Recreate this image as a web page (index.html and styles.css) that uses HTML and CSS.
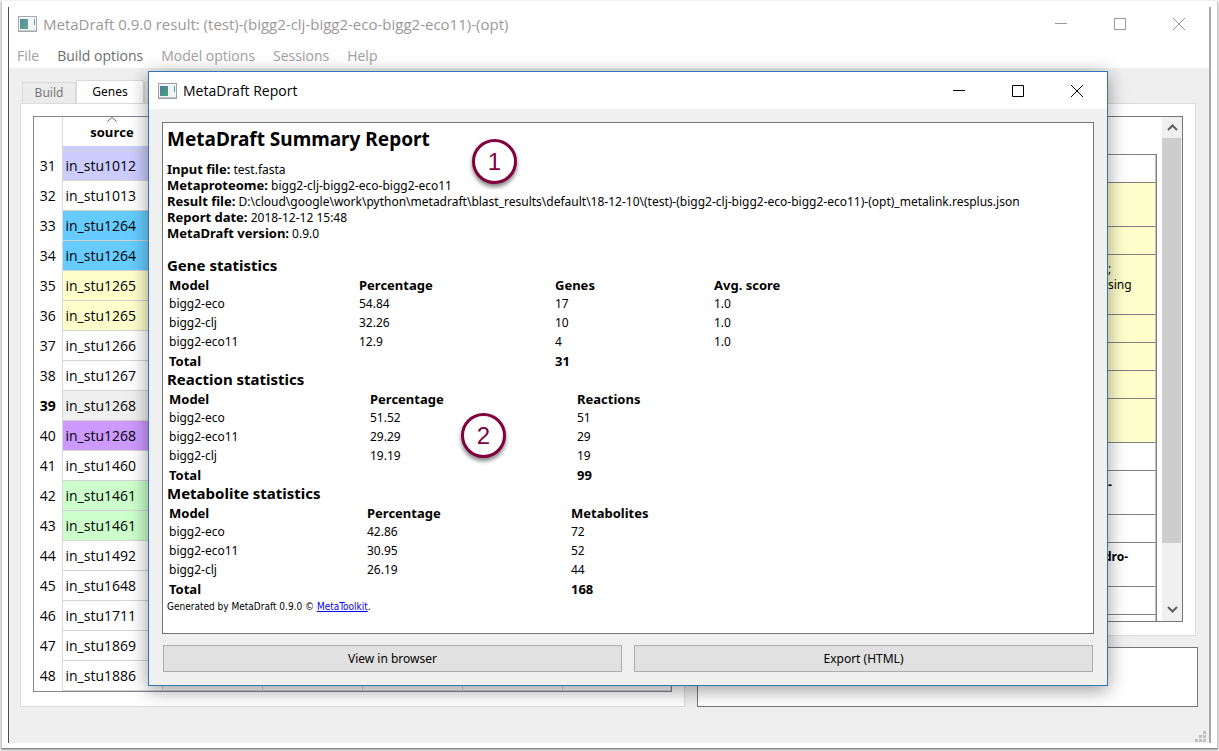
FILE: index.html
```html
<!DOCTYPE html>
<html lang="en">
<head>
<meta charset="utf-8">
<title>MetaDraft 0.9.0</title>
<link rel="stylesheet" href="styles.css">
</head>
<body>
<div class="frame">
<main class="window">
  <header class="titlebar titlebar-main">
    <svg class="app-icon" width="19" height="16" viewBox="0 0 19 16"><defs><linearGradient id="g" x1="0" y1="0" x2="1" y2="1"><stop offset="0" stop-color="#4a7ba0"/><stop offset="1" stop-color="#4ba376"/></linearGradient></defs><rect x=".5" y=".5" width="18" height="15" fill="#f1f3f4" stroke="#9aa0a6"/><rect x="2" y="3" width="8" height="10" fill="url(#g)"/><path d="M16.500 3v6" stroke="#4b9a9a"/><path d="M1 14.500h17" stroke="#c3c8cc"/></svg>
    <h1 class="title">MetaDraft 0.9.0 result: (test)-(bigg2-clj-bigg2-eco-bigg2-eco11)-(opt)</h1>
    <div class="controls">
      <button class="control" aria-label="Minimize"><svg width="12" height="12"><path d="M0 5.500h12"/></svg></button>
      <button class="control" aria-label="Maximize"><svg width="12" height="12"><path d="M.5.5h11v11H.5z"/></svg></button>
      <button class="control" aria-label="Close"><svg width="12" height="12"><path d="M0 0l12 12M12 0L0 12"/></svg></button>
    </div>
  </header>
  <nav class="menu">
    <button class="menu-item">File</button>
    <button class="menu-item active">Build options</button>
    <button class="menu-item">Model options</button>
    <button class="menu-item">Sessions</button>
    <button class="menu-item">Help</button>
  </nav>
  <div class="workspace">
    <section class="left">
      <div class="tabs">
        <button class="tab">Build</button>
        <button class="tab selected">Genes</button>
        <button class="tab" aria-label="More"></button>
      </div>
      <div class="pane pane-left">
        <div class="grid-box">
        <table class="genes">
          <colgroup><col class="c-num"><col class="c-cell"><col class="c-cell"><col class="c-cell"><col class="c-cell"><col class="c-cell"><col></colgroup>
          <thead><tr><td></td><th><svg width="10" height="5"><path d="M.5 4.500L5 .5l4.500 4"/></svg><span>source</span></th><td colspan="5"></td></tr></thead>
          <tbody>
          <tr class="sliver"><th></th><td class="lavender"></td><td colspan="5"></td></tr>
          <tr><th>31</th><td class="lavender">in_stu1012</td><td colspan="5"></td></tr>
          <tr><th>32</th><td>in_stu1013</td><td colspan="5"></td></tr>
          <tr><th>33</th><td class="blue">in_stu1264</td><td colspan="5"></td></tr>
          <tr><th>34</th><td class="blue">in_stu1264</td><td colspan="5"></td></tr>
          <tr><th>35</th><td class="yellow">in_stu1265</td><td colspan="5"></td></tr>
          <tr><th>36</th><td class="yellow">in_stu1265</td><td colspan="5"></td></tr>
          <tr><th>37</th><td>in_stu1266</td><td colspan="5"></td></tr>
          <tr><th>38</th><td>in_stu1267</td><td colspan="5"></td></tr>
          <tr><th class="current">39</th><td class="gray">in_stu1268</td><td colspan="5"></td></tr>
          <tr><th>40</th><td class="purple">in_stu1268</td><td colspan="5"></td></tr>
          <tr><th>41</th><td>in_stu1460</td><td colspan="5"></td></tr>
          <tr><th>42</th><td class="green">in_stu1461</td><td colspan="5"></td></tr>
          <tr><th>43</th><td class="green">in_stu1461</td><td colspan="5"></td></tr>
          <tr><th>44</th><td>in_stu1492</td><td colspan="5"></td></tr>
          <tr><th>45</th><td>in_stu1648</td><td colspan="5"></td></tr>
          <tr><th>46</th><td>in_stu1711</td><td colspan="5"></td></tr>
          <tr><th>47</th><td>in_stu1869</td><td colspan="5"></td></tr>
          <tr><th>48</th><td>in_stu1886</td><td></td><td></td><td></td><td></td><td></td></tr>
          </tbody>
        </table>
        </div>
      </div>
    </section>
    <section class="right">
      <div class="pane pane-right">
        <div class="details">
          <div class="rows">
            <div class="row one"></div>
            <div class="row two yellow"></div>
            <div class="row one yellow"></div>
            <div class="row three yellow"><span>;<br>sing</span></div>
            <div class="row one yellow"></div>
            <div class="row one yellow"></div>
            <div class="row one yellow"></div>
            <div class="row two yellow"></div>
            <div class="row one"></div>
            <div class="row two"><b class="dash">-</b></div>
            <div class="row one"></div>
            <div class="row two"><b class="dro">dro-</b></div>
            <div class="row one"></div>
            <div class="row rest"></div>
          </div>
          <div class="scrollbar">
            <svg width="20" height="21"><path d="M6 13l4.500-4.500L15 13"/></svg>
            <div class="thumb"></div>
            <svg width="20" height="21"><path d="M6 7l4.500 4.500L15 7"/></svg>
          </div>
        </div>
      </div>
      <textarea class="notes" aria-label="Notes"></textarea>
    </section>
  </div>
  <svg class="grip" width="12" height="12" fill="#bfbfbf"><path d="M8 0h3v3H8zM4 4h3v3H4zM8 4h3v3H8zM0 8h3v3H0zM4 8h3v3H4zM8 8h3v3H8z"/></svg>
</main>
</div>

<section class="dialog" role="dialog" aria-labelledby="dlg">
  <header class="titlebar">
    <svg class="app-icon" width="19" height="16" viewBox="0 0 19 16"><rect x=".5" y=".5" width="18" height="15" fill="#f1f3f4" stroke="#9aa0a6"/><rect x="2" y="3" width="8" height="10" fill="url(#g)"/><path d="M16.500 3v6" stroke="#4b9a9a"/><path d="M1 14.500h17" stroke="#c3c8cc"/></svg>
    <h2 class="title" id="dlg">MetaDraft Report</h2>
    <div class="controls">
      <button class="control" aria-label="Minimize"><svg width="12" height="12"><path d="M0 5.500h12"/></svg></button>
      <button class="control" aria-label="Maximize"><svg width="12" height="12"><path d="M.5.5h11v11H.5z"/></svg></button>
      <button class="control" aria-label="Close"><svg width="12" height="12"><path d="M0 0l12 12M12 0L0 12"/></svg></button>
    </div>
  </header>
  <div class="dialog-body">
    <article class="report">
      <h1>MetaDraft Summary Report</h1>
      <p class="facts"><b>Input file:</b> test.fasta<br><b>Metaproteome:</b> bigg2-clj-bigg2-eco-bigg2-eco11<br><b>Result file:</b> D:\cloud\google\work\python\metadraft\blast_results\default\18-12-10\(test)-(bigg2-clj-bigg2-eco-bigg2-eco11)-(opt)_metalink.resplus.json<br><b>Report date:</b> 2018-12-12 15:48<br><b>MetaDraft version:</b> 0.9.0</p>
      <h2>Gene statistics</h2>
      <table class="stats stats-genes">
        <tr><th>Model</th><th>Percentage</th><th>Genes</th><th>Avg. score</th></tr>
        <tr><td>bigg2-eco</td><td>54.84</td><td>17</td><td>1.0</td></tr>
        <tr><td>bigg2-clj</td><td>32.26</td><td>10</td><td>1.0</td></tr>
        <tr><td>bigg2-eco11</td><td>12.9</td><td>4</td><td>1.0</td></tr>
        <tr><th>Total</th><td></td><th>31</th><td></td></tr>
      </table>
      <h2>Reaction statistics</h2>
      <table class="stats stats-reactions">
        <tr><th>Model</th><th>Percentage</th><th>Reactions</th></tr>
        <tr><td>bigg2-eco</td><td>51.52</td><td>51</td></tr>
        <tr><td>bigg2-eco11</td><td>29.29</td><td>29</td></tr>
        <tr><td>bigg2-clj</td><td>19.19</td><td>19</td></tr>
        <tr><th>Total</th><td></td><th>99</th></tr>
      </table>
      <h2>Metabolite statistics</h2>
      <table class="stats stats-metabolites">
        <tr><th>Model</th><th>Percentage</th><th>Metabolites</th></tr>
        <tr><td>bigg2-eco</td><td>42.86</td><td>72</td></tr>
        <tr><td>bigg2-eco11</td><td>30.95</td><td>52</td></tr>
        <tr><td>bigg2-clj</td><td>26.19</td><td>44</td></tr>
        <tr><th>Total</th><td></td><th>168</th></tr>
      </table>
      <p class="credit">Generated by MetaDraft 0.9.0 © <a href="#">MetaToolkit</a>.</p>
    </article>
    <div class="actions">
      <button class="action">View in browser</button>
      <button class="action">Export (HTML)</button>
    </div>
  </div>
  <span class="callout callout-1">1</span>
  <span class="callout callout-2">2</span>
</section>
</body>
</html>
```
FILE: styles.css
```css
* { box-sizing: border-box; }
body {
  margin: 0;
  min-height: 100vh;
  display: flex;
  position: relative;
  padding: 1px 1px 3px;
  background: #f6f6f6;
  color: #000;
  font: 12px/16px "Noto Sans", sans-serif;
}
h1, h2, p { margin: 0; }
button { font: inherit; color: inherit; border: 0; background: none; padding: 0; }
table { border-collapse: collapse; }
th { text-align: left; }

.frame {
  flex: 1;
  display: flex;
  padding: 6px 6px 5px;
  background: #fff;
  border-bottom: 1px solid #8a8a8a;
  border-left: 1px solid #c8c8c8;
  border-right: 1px solid #c8c8c8;
  box-shadow: 0 1px 2px #999;
}
.window {
  flex: 1;
  display: flex;
  flex-direction: column;
  position: relative;
  background: #efefef;
  border-left: 1px solid #4a4f50;
  border-right: 2px solid #a9a9a9;
}

/* Title bars */
.titlebar {
  display: flex;
  align-items: center;
  height: 37px;
  padding: 0 9px;
  background: #fff;
  font-family: "Open Sans", sans-serif;
}
.titlebar-main { height: 34px; color: #999; }
.titlebar-main .app-icon { opacity: .9; }
.title { flex: 1; padding-left: 6px; font-size: 14px; line-height: 20px; font-weight: 400; }
.titlebar-main .title { font-size: 15px; }
.controls { display: flex; padding-right: 15px; gap: 47px; }
.control { display: flex; }
.control path { fill: none; stroke: currentColor; }

.menu {
  display: flex;
  gap: 18px;
  height: 27px;
  padding: 5px 8px 0;
  background: #fff;
  color: #a0a0a0;
  font: 14px/20px "Open Sans", sans-serif;
}
.menu-item { height: 20px; }
.menu-item.active { color: #6d6d6d; }

/* Main content */
.workspace { flex: 1; display: flex; gap: 12px; padding: 12px 11px 36px; }
.left { flex: 665; display: flex; flex-direction: column; }
.right { flex: 501; display: flex; flex-direction: column; padding-top: 23px; }
.tabs { display: flex; align-items: flex-end; height: 23px; padding-left: 2px; }
.tab {
  width: 54px;
  height: 21px;
  border: 1px solid #d9d9d9;
  border-bottom: 0;
  color: #777;
  background: #ececec;
}
.tab.selected { width: 68px; height: 23px; color: #000; background: #fff; }
.pane { flex: 1; background: #fff; border: 1px solid #dcdcdc; }
.pane-left { padding: 12px 12px 14px; display: flex; }
.grid-box { flex: 1; border: 1px solid #828790; }

.genes { width: 100%; table-layout: fixed; font: 14px/20px "Open Sans", sans-serif; }
.c-num { width: 28px; }
.c-cell { width: 100px; }
.genes td, .genes th { padding: 0; border-right: 1px solid #d8d8d8; }
.genes thead { height: 29px; }
.genes thead th { text-align: center; vertical-align: bottom; font: 700 13px/20px "Open Sans", sans-serif; }
.genes thead svg { display: block; margin: 0 auto; }
.genes thead span { display: block; height: 24px; line-height: 20px; }
.genes path { fill: none; stroke: #666; }
.genes tbody tr { height: 30px; }
.genes tbody tr.sliver { height: 4px; }
.genes tbody td { padding: 2px 0 0 3px; border-bottom: 1px solid #d4d4d4; }
.genes tbody th { padding-top: 2px; text-align: center; font-weight: 400; }
.genes tbody th.current { font-weight: 700; }
.genes .lavender { background: #ccccff; }
.genes .blue { background: #66ccff; }
.genes .yellow, .row.yellow { background: #ffffcc; }
.genes .gray { background: #efefef; }
.genes .purple { background: #cc99ff; }
.genes .green { background: #ccffcc; }

.pane-right { flex: 0 0 533px; min-height: 0; margin-right: 2px; padding: 12px 12px 13px; display: flex; }
.details { flex: 1; display: flex; justify-content: space-between; border: 1px solid #767676; overflow: hidden; }
.rows {
  flex: 1;
  display: flex;
  flex-direction: column;
  margin: 37px 5px 0 12px;
  border: 2px solid #808080;
  border-top-width: 1px;
  border-bottom: 0;
  border-right-width: 1px;
  overflow: hidden;
}
.row {
  flex: none;
  padding: 6px 8px 0 0;
  border: 1px solid #c0c0c0;
  border-bottom-color: #808080;
  border-left: 0;
  border-top: 0;
  text-align: right;
}
.row.one { height: 28px; }
.row.two { height: 44px; }
.row.three { height: 60px; }
.row.rest { height: 28px; }
.row span, .row b { display: inline-block; width: 39px; text-align: left; }
.row .dro { width: 43px; }
.scrollbar { flex: none; width: 20px; display: flex; flex-direction: column; background: #f0f0f0; }
.scrollbar path { fill: none; stroke: #606060; stroke-width: 2; }
.thumb { height: 405px; margin-right: 1px; background: #cdcdcd; }
.scrollbar .thumb + svg { margin-top: auto; }
.notes { flex: 1; min-height: 59px; margin-top: 11px; border: 1px solid #767676; background: #fff; resize: none; }
.grip { position: absolute; right: 2px; bottom: 0; }

/* Report dialog floating over the main window */
.dialog {
  position: absolute;
  top: 71px;
  left: 148px;
  right: 111px;
  background: #f0f0f0;
  border: 1px solid #3475b8;
  box-shadow: 0 4px 18px rgba(0, 0, 0, .4);
}
.dialog-body { padding: 13px 13px; }
.report { min-height: 512px; padding: 4px; background: #fff; border: 1px solid #767676; }
.report h1 { font-size: 19px; line-height: 25px; }
.report h2 { font-size: 15px; line-height: 19px; }
.facts { padding: 10px 0 14px; }
.facts b, .stats th { font-size: 13px; }
.facts b { line-height: 12px; }
.stats { table-layout: fixed; }
.stats th, .stats td { height: 19px; padding: 0 2px; line-height: 16px; }
.stats-genes { width: 700px; }
.stats-genes th:nth-child(1) { width: 190px; }
.stats-genes th:nth-child(2) { width: 196px; }
.stats-genes th:nth-child(3) { width: 159px; }
.stats-reactions { width: 600px; }
.stats-reactions th:nth-child(1) { width: 201px; }
.stats-reactions th:nth-child(2) { width: 207px; }
.stats-metabolites { width: 600px; }
.stats-metabolites th:nth-child(1) { width: 198px; }
.stats-metabolites th:nth-child(2) { width: 204px; }
.credit { font: 10px/18px "DejaVu Sans Condensed", "DejaVu Sans", sans-serif; }
.credit a { color: #00f; }
.actions { display: flex; gap: 12px; padding: 11px 1px 0; }
.action { flex: 1; height: 27px; border: 1px solid #adadad; background: #e1e1e1; }

.callout {
  position: absolute;
  width: 45px;
  height: 45px;
  border: 3px solid #800040;
  border-radius: 50%;
  background: #fff;
  color: #800040;
  font: 24px/39px "Liberation Sans", sans-serif;
  text-align: center;
  box-shadow: 0 3px 4px rgba(0, 0, 0, .5);
}
.callout-1 { left: 323px; top: 67px; }
.callout-2 { left: 312px; top: 341px; }
```
